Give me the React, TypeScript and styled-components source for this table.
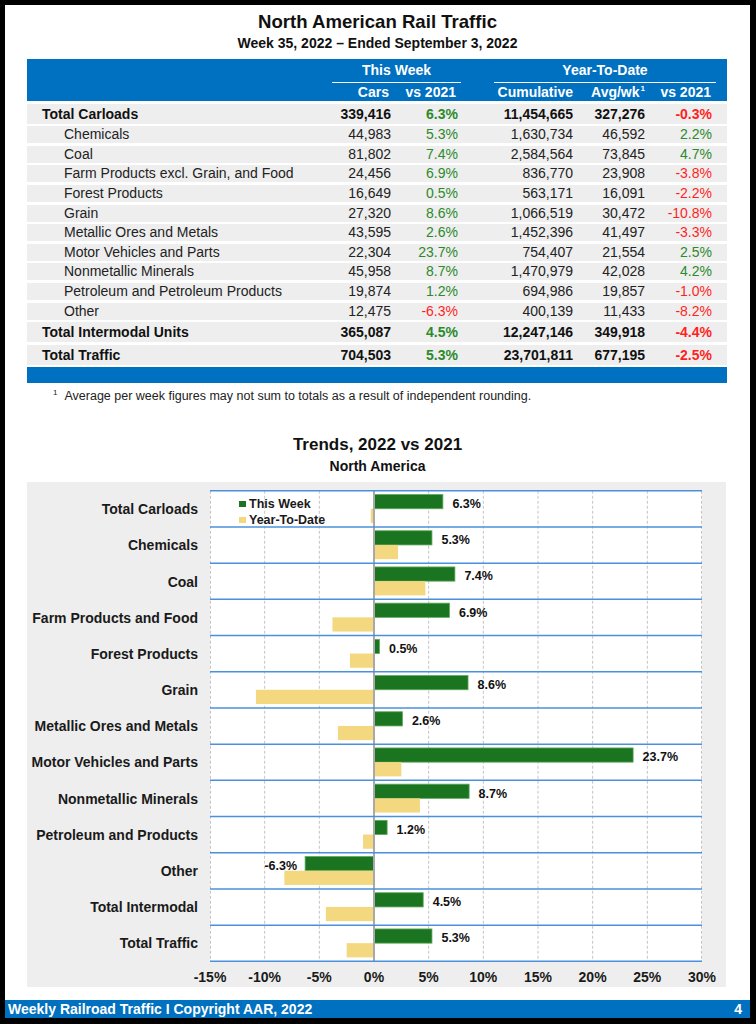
import React from "react";
import styled, { createGlobalStyle } from "styled-components";

const GlobalStyle = createGlobalStyle`
  *, *::before, *::after { box-sizing: border-box; }
  html, body { margin: 0; padding: 0; background: #000; }
  body { font-family: "Liberation Sans", Arial, Helvetica, sans-serif; }
`;

const BLUE = "#0070C0";
const GREEN_TEXT = "#2b8a2b";
const RED_TEXT = "#ff1f1f";
const COLS = "305px 59px 70px 33px 79px 72px 71px";

const Page = styled.div`
  width: 745px;
  height: 1013px;
  margin: 5px 0 0 5px;
  background: #fff;
  display: flex;
  flex-direction: column;
  color: #1a1a1a;
`;

const Title = styled.h1`
  margin: 6px 0 0;
  font-size: 18.6px;
  line-height: 22px;
  font-weight: 700;
  text-align: center;
  color: #111;
`;

const Subtitle = styled.h2`
  margin: 1px 0 0;
  font-size: 14px;
  line-height: 18px;
  font-weight: 700;
  text-align: center;
  color: #111;
`;

const Table = styled.div`
  margin: 7px 0 0 22px;
  width: 700px;
  display: flex;
  flex-direction: column;
  gap: 2.6px;
`;

const HeaderBlock = styled.div`
  background: ${BLUE};
  height: 42px;
  display: grid;
  grid-template-columns: ${COLS};
  grid-template-rows: 23.5px 18.5px;
  padding-right: 11px;
  color: #fff;
  font-weight: 700;
  font-size: 14px;
`;

const HeaderGroup = styled.div<{ $col: string }>`
  grid-row: 1;
  grid-column: ${(p) => p.$col};
  text-align: center;
  line-height: 22px;
  border-bottom: 1.5px solid #fff;
`;

const HeaderCell = styled.div<{ $col: number; $pr?: number }>`
  grid-row: 2;
  grid-column: ${(p) => p.$col};
  text-align: right;
  line-height: 18.5px;
  padding-right: ${(p) => p.$pr ?? 0}px;
  white-space: nowrap;

  sup {
    font-size: 8px;
    line-height: 0;
    vertical-align: 6px;
    margin-left: 1px;
  }
`;

const DataRow = styled.div<{ $total?: boolean }>`
  display: grid;
  grid-template-columns: ${COLS};
  padding-right: 11px;
  background: #eeeeee;
  height: ${(p) => (p.$total ? 20 : 17)}px;
  line-height: ${(p) => (p.$total ? 20 : 17)}px;
  font-size: 14px;
  font-weight: ${(p) => (p.$total ? 700 : 400)};
  color: ${(p) => (p.$total ? "#111" : "#222")};
`;

const RowLabel = styled.div<{ $total?: boolean }>`
  padding-left: ${(p) => (p.$total ? 15 : 37)}px;
  white-space: nowrap;
`;

const Num = styled.div<{ $pr?: number; $tone?: string }>`
  text-align: right;
  white-space: nowrap;
  padding-right: ${(p) => p.$pr ?? 0}px;
  color: ${(p) => p.$tone ?? "inherit"};
`;

const Spacer = styled.div``;

const EndBar = styled.div`
  background: ${BLUE};
  height: 16px;
`;

const Footnote = styled.p`
  margin: 5px 0 0 48px;
  font-size: 12.5px;
  line-height: 16px;
  color: #222;
`;

const FootSup = styled.span`
  font-size: 8px;
  vertical-align: 5px;
  line-height: 0;
  margin-right: 7px;
`;

const ChartTitle = styled.h2`
  margin: 31px 0 0;
  font-size: 17px;
  line-height: 20px;
  font-weight: 700;
  text-align: center;
  color: #111;
`;

const ChartSub = styled.h3`
  margin: 2px 0 0;
  font-size: 14px;
  line-height: 18px;
  font-weight: 700;
  text-align: center;
  color: #111;
`;

const Panel = styled.div`
  margin: 7px 0 0 22px;
  width: 699px;
  background: #eeeeee;
  display: grid;
  grid-template-columns: 183px 492px;
  grid-template-rows: 472px 25px;
  padding-top: 8px;
`;

const CatLabels = styled.div`
  display: flex;
  flex-direction: column;
  padding-top: 0.75px;
`;

const CatLabel = styled.div`
  height: 36.2px;
  display: flex;
  align-items: center;
  justify-content: flex-end;
  padding-right: 12px;
  font-size: 14px;
  font-weight: 700;
  white-space: nowrap;
  color: #1a1a1a;
`;

const Plot = styled.div`
  position: relative;
  width: 492px;
  height: 472px;
`;

const Legend = styled.div`
  position: absolute;
  left: 29px;
  top: 5.3px;
  font-size: 12.5px;
  line-height: 16.4px;
  font-weight: 700;
  color: #1a1a1a;
`;

const LegendItem = styled.div`
  display: flex;
  align-items: center;
  gap: 3px;
`;

const Swatch = styled.span<{ $color: string }>`
  width: 7px;
  height: 6px;
  background: ${(p) => p.$color};
`;

const Axis = styled.div`
  grid-column: 2;
  grid-row: 2;
  display: flex;
  margin-left: -27.333px;
  width: 546.67px;
  padding-top: 6px;
`;

const AxisTick = styled.div`
  width: 54.667px;
  flex: none;
  text-align: center;
  font-size: 14px;
  line-height: 19px;
  font-weight: 700;
  color: #1a1a1a;
`;

const Footer = styled.footer`
  margin-top: auto;
  height: 18px;
  background: ${BLUE};
  color: #fff;
  display: flex;
  justify-content: space-between;
  padding: 0 8px 0 3px;
  font-size: 14px;
  line-height: 18px;
  font-weight: 700;
`;

type Row = {
  label: string;
  total?: boolean;
  cars: string;
  vs: string;
  cum: string;
  avg: string;
  ytd: string;
};

const rows: Row[] = [
  { label: "Total Carloads", total: true, cars: "339,416", vs: "6.3%", cum: "11,454,665", avg: "327,276", ytd: "-0.3%" },
  { label: "Chemicals", cars: "44,983", vs: "5.3%", cum: "1,630,734", avg: "46,592", ytd: "2.2%" },
  { label: "Coal", cars: "81,802", vs: "7.4%", cum: "2,584,564", avg: "73,845", ytd: "4.7%" },
  { label: "Farm Products excl. Grain, and Food", cars: "24,456", vs: "6.9%", cum: "836,770", avg: "23,908", ytd: "-3.8%" },
  { label: "Forest Products", cars: "16,649", vs: "0.5%", cum: "563,171", avg: "16,091", ytd: "-2.2%" },
  { label: "Grain", cars: "27,320", vs: "8.6%", cum: "1,066,519", avg: "30,472", ytd: "-10.8%" },
  { label: "Metallic Ores and Metals", cars: "43,595", vs: "2.6%", cum: "1,452,396", avg: "41,497", ytd: "-3.3%" },
  { label: "Motor Vehicles and Parts", cars: "22,304", vs: "23.7%", cum: "754,407", avg: "21,554", ytd: "2.5%" },
  { label: "Nonmetallic Minerals", cars: "45,958", vs: "8.7%", cum: "1,470,979", avg: "42,028", ytd: "4.2%" },
  { label: "Petroleum and Petroleum Products", cars: "19,874", vs: "1.2%", cum: "694,986", avg: "19,857", ytd: "-1.0%" },
  { label: "Other", cars: "12,475", vs: "-6.3%", cum: "400,139", avg: "11,433", ytd: "-8.2%" },
  { label: "Total Intermodal Units", total: true, cars: "365,087", vs: "4.5%", cum: "12,247,146", avg: "349,918", ytd: "-4.4%" },
  { label: "Total Traffic", total: true, cars: "704,503", vs: "5.3%", cum: "23,701,811", avg: "677,195", ytd: "-2.5%" },
];

const tone = (v: string) => (v.startsWith("-") ? RED_TEXT : GREEN_TEXT);

const chart = [
  { label: "Total Carloads", week: 6.3, ytd: -0.3 },
  { label: "Chemicals", week: 5.3, ytd: 2.2 },
  { label: "Coal", week: 7.4, ytd: 4.7 },
  { label: "Farm Products and Food", week: 6.9, ytd: -3.8 },
  { label: "Forest Products", week: 0.5, ytd: -2.2 },
  { label: "Grain", week: 8.6, ytd: -10.8 },
  { label: "Metallic Ores and Metals", week: 2.6, ytd: -3.3 },
  { label: "Motor Vehicles and Parts", week: 23.7, ytd: 2.5 },
  { label: "Nonmetallic Minerals", week: 8.7, ytd: 4.2 },
  { label: "Petroleum and Products", week: 1.2, ytd: -1.0 },
  { label: "Other", week: -6.3, ytd: -8.2 },
  { label: "Total Intermodal", week: 4.5, ytd: -4.4 },
  { label: "Total Traffic", week: 5.3, ytd: -2.5 },
];

const W = 492;
const ROW = 36.2;
const SCALE = W / 45;
const ZERO = 15 * SCALE;
const TOP = 0.75;
const BAR_GREEN = "#1b741f";
const BAR_YELLOW = "#f4d87f";

const ticks = ["-15%", "-10%", "-5%", "0%", "5%", "10%", "15%", "20%", "25%", "30%"];

function BarChart() {
  const bottom = TOP + chart.length * ROW;
  return (
    <svg width={W} height={472} viewBox={`0 0 ${W} 472`} style={{ display: "block" }}>
      <rect x={0} y={TOP} width={W} height={bottom - TOP} fill="#fff" />
      {ticks.map((_, i) => {
        if (i === 3) return null;
        let x = (i * W) / 9;
        if (x < 0.5) x = 0.5;
        if (x > W - 0.5) x = W - 0.5;
        return (
          <line key={i} x1={x} x2={x} y1={TOP} y2={bottom} stroke="#c4c4c4" strokeWidth={1} strokeDasharray="3 2" />
        );
      })}
      {chart.map((d, i) => {
        const top = TOP + i * ROW;
        const gw = Math.abs(d.week) * SCALE;
        const gx = d.week >= 0 ? ZERO : ZERO - gw;
        const yw = Math.abs(d.ytd) * SCALE;
        const yx = d.ytd >= 0 ? ZERO : ZERO - yw;
        const pos = d.week >= 0;
        return (
          <g key={d.label}>
            <rect x={gx} y={top + 3.8} width={gw} height={14.2} fill={BAR_GREEN} stroke="#5ea95e" strokeWidth={0.8} />
            <rect x={yx} y={top + 18} width={yw} height={14.2} fill={BAR_YELLOW} />
            <text
              x={pos ? gx + gw + 9.5 : gx - 8}
              y={top + 17.2}
              textAnchor={pos ? "start" : "end"}
              fontFamily='"Liberation Sans", Arial, sans-serif'
              fontSize={12.5}
              fontWeight={700}
              fill="#111"
            >
              {`${d.week.toFixed(1)}%`}
            </text>
          </g>
        );
      })}
      <line x1={ZERO} x2={ZERO} y1={TOP} y2={bottom} stroke="#a9a9a9" strokeWidth={2} />
      {Array.from({ length: chart.length + 1 }).map((_, i) => (
        <line key={i} x1={0} x2={W} y1={TOP + i * ROW} y2={TOP + i * ROW} stroke="#4a90dc" strokeWidth={1.5} />
      ))}
    </svg>
  );
}

export default function App() {
  return (
    <>
      <GlobalStyle />
      <Page>
        <Title>North American Rail Traffic</Title>
        <Subtitle>Week 35, 2022 – Ended September 3, 2022</Subtitle>

        <Table>
          <HeaderBlock>
            <HeaderGroup $col="2 / 4">This Week</HeaderGroup>
            <HeaderGroup $col="5 / 8">Year-To-Date</HeaderGroup>
            <HeaderCell $col={2} $pr={2}>Cars</HeaderCell>
            <HeaderCell $col={3} $pr={5}>vs 2021</HeaderCell>
            <HeaderCell $col={5}>Cumulative</HeaderCell>
            <HeaderCell $col={6}>
              Avg/wk<sup>1</sup>
            </HeaderCell>
            <HeaderCell $col={7} $pr={5}>vs 2021</HeaderCell>
          </HeaderBlock>
          {rows.map((r) => (
            <DataRow key={r.label} $total={r.total}>
              <RowLabel $total={r.total}>{r.label}</RowLabel>
              <Num>{r.cars}</Num>
              <Num $pr={3} $tone={tone(r.vs)}>{r.vs}</Num>
              <Spacer />
              <Num>{r.cum}</Num>
              <Num>{r.avg}</Num>
              <Num $pr={4} $tone={tone(r.ytd)}>{r.ytd}</Num>
            </DataRow>
          ))}
          <EndBar />
        </Table>

        <Footnote>
          <FootSup>1</FootSup>Average per week figures may not sum to totals as a result of independent rounding.
        </Footnote>

        <ChartTitle>Trends, 2022 vs 2021</ChartTitle>
        <ChartSub>North America</ChartSub>

        <Panel>
          <CatLabels>
            {chart.map((d) => (
              <CatLabel key={d.label}>{d.label}</CatLabel>
            ))}
          </CatLabels>
          <Plot>
            <BarChart />
            <Legend>
              <LegendItem>
                <Swatch $color={BAR_GREEN} />
                This Week
              </LegendItem>
              <LegendItem>
                <Swatch $color={BAR_YELLOW} />
                Year-To-Date
              </LegendItem>
            </Legend>
          </Plot>
          <Axis>
            {ticks.map((t) => (
              <AxisTick key={t}>{t}</AxisTick>
            ))}
          </Axis>
        </Panel>

        <Footer>
          <span>Weekly Railroad Traffic I Copyright AAR, 2022</span>
          <span>4</span>
        </Footer>
      </Page>
    </>
  );
}
